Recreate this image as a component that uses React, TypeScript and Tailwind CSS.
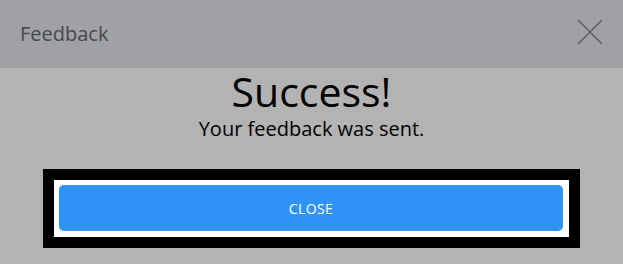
const App = () => {
  return (
    <div
      className="flex h-screen w-full flex-col bg-[#b3b3b3]"
      style={{ fontFamily: '"Open Sans", "Noto Sans", sans-serif' }}
    >
      <div className="flex h-[68px] items-center justify-between bg-[#9fa1a5] px-5">
        <span className="text-[20px] leading-7 text-[#46484c]">Feedback</span>
        <svg
          width="26"
          height="26"
          viewBox="0 0 26 26"
          className="-mt-[5px] text-[#5c5e62]"
          fill="none"
          stroke="currentColor"
          strokeWidth="1.6"
        >
          <path d="M1 1L25 25M25 1L1 25" />
        </svg>
      </div>

      <div className="flex flex-col items-center text-black">
        <h1 className="mt-[3px] text-[41px] leading-[41px]">Success!</h1>
        <p className="mt-[4px] text-[20px] leading-[26px]">Your feedback was sent.</p>
      </div>

      <div className="mx-[43px] mt-[27px] border-[11px] border-black bg-white pt-[5px] pr-[6px] pb-[6px] pl-[5px]">
        <button className="flex h-[46px] w-full items-center justify-center rounded-[5px] bg-[#3093f8] text-[14px] tracking-[0.03em] text-white">
          CLOSE
        </button>
      </div>
    </div>
  );
};

export default App;
